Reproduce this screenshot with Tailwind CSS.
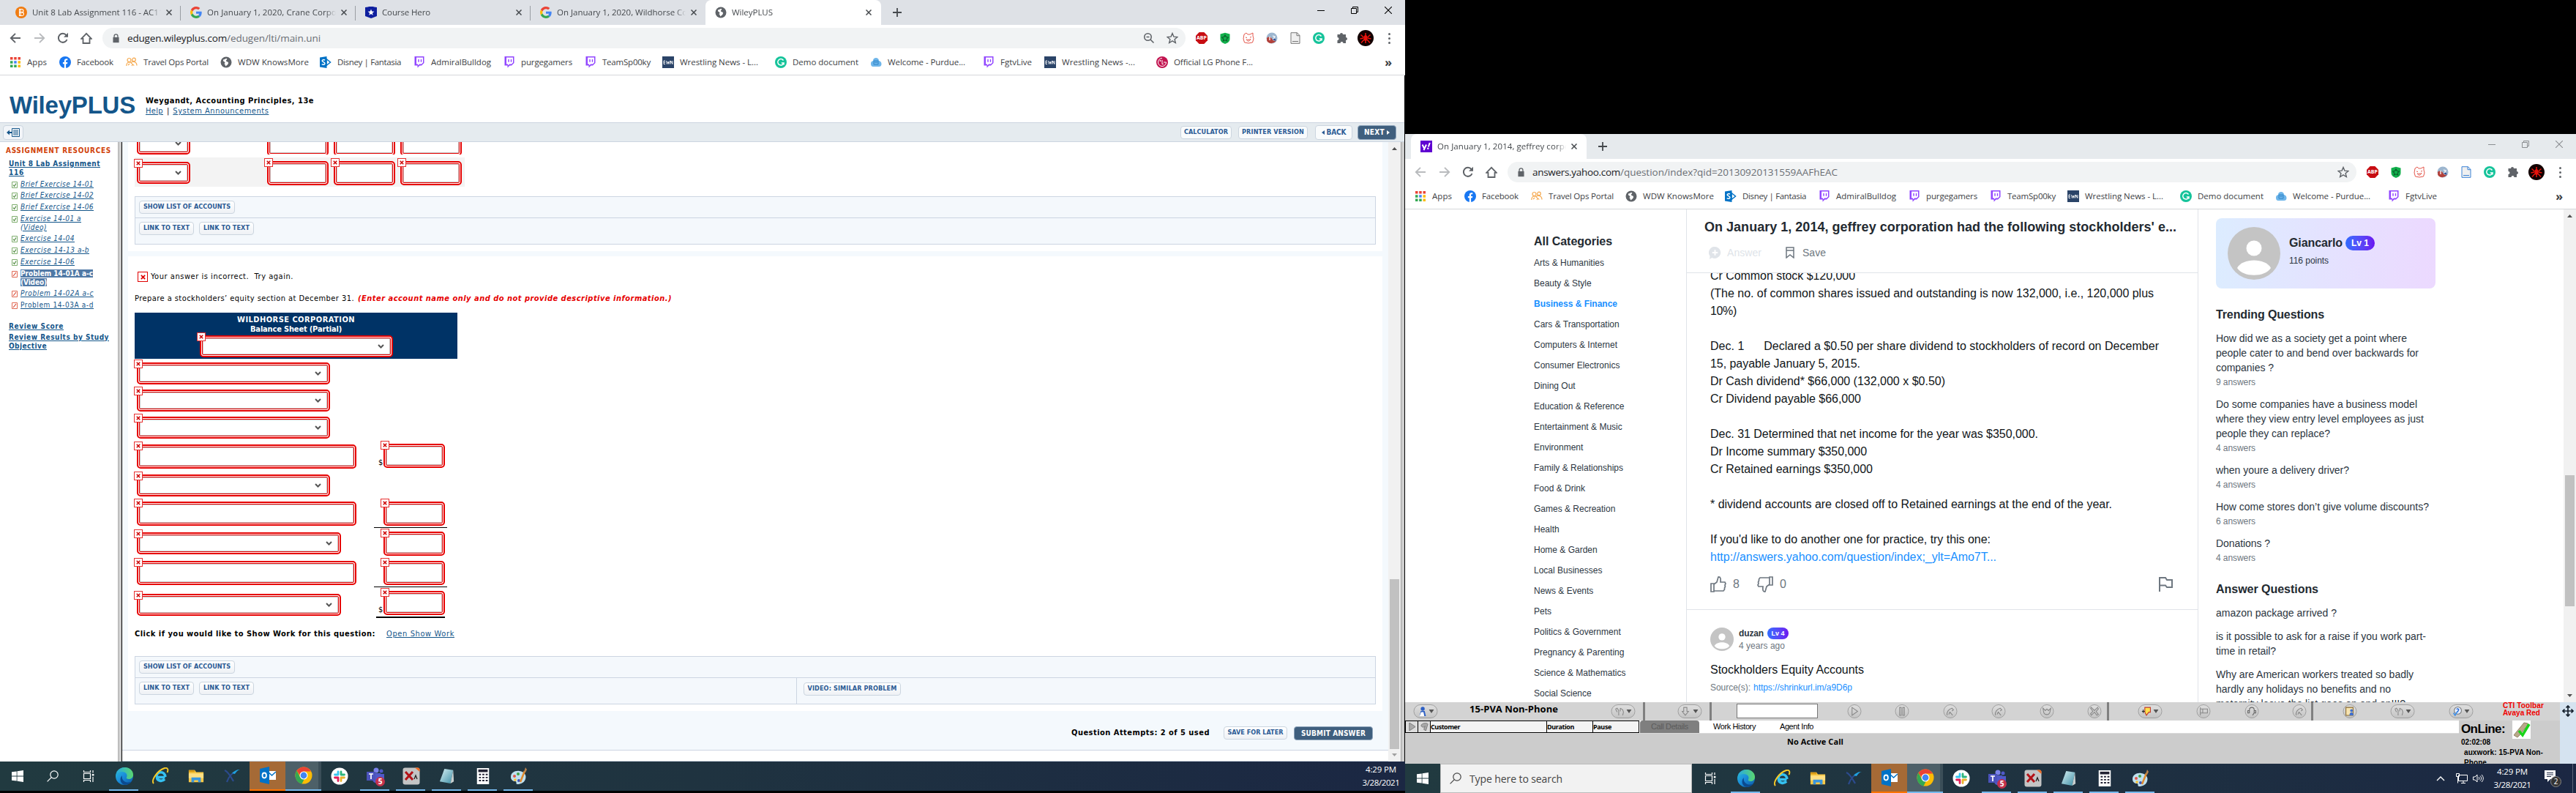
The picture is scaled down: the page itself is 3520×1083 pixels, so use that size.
<!DOCTYPE html>
<html lang="en">
<head>
    <meta charset="UTF-8" />
    <meta name="viewport" content="width=device-width, initial-scale=1.0" />
    <title>Desktop</title>
    <script src="https://cdn.jsdelivr.net/npm/@tailwindcss/browser@4"></script>
</head>
<body class="bg-black">

<!-- Icon sprite -->
<svg class="absolute size-0">
  <defs>
    <linearGradient id="gEdge" x1="0" y1="0" x2="1" y2="1"><stop offset="0" stop-color="#2bc3d2"/><stop offset=".45" stop-color="#1b8fdc"/><stop offset="1" stop-color="#0c59a4"/></linearGradient>
    <linearGradient id="gEdge2" x1="0" y1="0" x2="1" y2="0"><stop offset="0" stop-color="#29a9e0"/><stop offset="1" stop-color="#5ad66f"/></linearGradient>
    <linearGradient id="gNote" x1="0" y1="0" x2="1" y2="1"><stop offset="0" stop-color="#d9f2f5"/><stop offset="1" stop-color="#3f8fa6"/></linearGradient>
  </defs>
  <symbol id="bartleby" viewBox="0 0 16 16"><circle cx="8" cy="8" r="8" fill="#f07c12"/><path d="M5.500 3.500h3.200a2.200 2.200 0 0 1 0 4.400H5.500zM5.500 7.900h3.600a2.300 2.300 0 0 1 0 4.600H5.500zM7.300 3.500v9" fill="none" stroke="#fff" stroke-width="1.100"/></symbol>
  <symbol id="google" viewBox="0 0 48 48"><path fill="#EA4335" d="M24 9.500c3.500 0 6.700 1.200 9.200 3.600l6.900-6.900C35.900 2.400 30.500 0 24 0 14.600 0 6.500 5.400 2.600 13.200l8 6.200C12.400 13.700 17.700 9.500 24 9.500z"/><path fill="#4285F4" d="M47 24.600c0-1.600-.2-3.100-.4-4.600H24v9h12.900c-.6 3-2.200 5.500-4.700 7.200l7.700 6C44.400 38 47 31.800 47 24.600z"/><path fill="#FBBC05" d="M10.500 28.600c-.5-1.500-.8-3-.8-4.600s.3-3.100.8-4.600l-8-6.200C.9 16.500 0 20.100 0 24s.9 7.500 2.600 10.800z"/><path fill="#34A853" d="M24 48c6.500 0 11.900-2.100 15.900-5.800l-7.700-6c-2.200 1.500-4.900 2.300-8.200 2.300-6.300 0-11.600-4.200-13.500-9.900l-8 6.200C6.500 42.600 14.600 48 24 48z"/></symbol>
  <symbol id="hero" viewBox="0 0 16 16"><path d="M0 1c3 0 5-1 5-1h6s2 1 5 1v12l-8 3-8-3z" fill="#0f1f9e"/><path d="M8 3.500l1.200 3 3.200.2-2.500 2 .8 3.100L8 10.100l-2.700 1.700.8-3.100-2.500-2 3.200-.2z" fill="#fff"/></symbol>
  <symbol id="globe" viewBox="0 0 16 16"><circle cx="8" cy="8" r="7.500" fill="#5f6368"/><path d="M4 4.500c2 0 3-2 5-1.500 1 1-1.500 2-1 3.500 1 1 3 .5 3 2.500s-2 3-4 4.500c0-2-.5-3-2-3.500 3-.5 1-3-1-3.500" fill="#fff"/></symbol>
  <symbol id="yahoo" viewBox="0 0 16 16"><rect width="16" height="16" fill="#5f01d1"/><path d="M2.500 5.500l2.700 5.200M8 5.500L4.500 13.200M12.800 3l-2 5.500" stroke="#fff" stroke-width="2" fill="none"/><circle cx="10.300" cy="10.800" r="1.200" fill="#fff"/></symbol>
  <symbol id="apps" viewBox="0 0 16 16"><path d="M1 1h3.500v3.500H1zM6.200 1h3.500v3.500H6.200zM11.500 1H15v3.500h-3.500z" fill="#ea4335"/><path d="M1 6.200h3.500v3.500H1zM1 11.500h3.500V15H1zM6.200 11.500h3.500V15H6.200z" fill="#34a853"/><path d="M6.200 6.200h3.500v3.500H6.200z" fill="#4285f4"/><path d="M11.500 6.200H15v3.500h-3.500zM11.500 11.500H15V15h-3.500z" fill="#fbbc05"/></symbol>
  <symbol id="facebook" viewBox="0 0 16 16"><circle cx="8" cy="8" r="8" fill="#1877f2"/><path d="M6.800 16v-5.700H4.900V8h1.900V6.200c0-2 1.200-3 2.900-3l1.600.1v2h-1c-.9 0-1.200.5-1.200 1.100V8h2.200l-.4 2.300H9.100V16z" fill="#fff"/></symbol>
  <symbol id="travel" viewBox="0 0 16 16"><g fill="none" stroke="#f5a94f" stroke-width="1.200"><circle cx="4.500" cy="5" r="2.500"/><circle cx="11" cy="4.500" r="2.300"/><path d="M.8 13c0-3 1.500-5 4-5s4 3 6.500 4.500M7 9c1-1.500 3-2 4.500-1.500s3.500 2 3.500 5M3 12l2-2M8 13l1.500-2"/></g></symbol>
  <symbol id="share" viewBox="0 0 16 16"><path d="M9 3.500l5.500 4.500L9 12.500z" fill="none" stroke="#0072c6" stroke-width="1.500"/><path d="M0 1.500L9.500 0v16L0 14.500z" fill="#0072c6"/><path d="M7 5.200c-1.500-1-3.800-.7-3.800.8 0 1.800 3.700 1.500 3.700 3.700 0 1.700-2.500 2-4.200.9" fill="none" stroke="#fff" stroke-width="1.500"/></symbol>
  <symbol id="twitch" viewBox="0 0 16 16"><path d="M1.500 0h13v9L11 12.500H8.500L5.500 15.500v-3h-4z" fill="#9146ff"/><path d="M4 1.500h9v7l-2 2H8.200L6 12.300v-1.800H4z" fill="#fff"/><path d="M7 4v3.800M10.500 4v3.800" stroke="#9146ff" stroke-width="1.400"/></symbol>
  <symbol id="ewn" viewBox="0 0 16 16"><rect width="16" height="16" fill="#2b4468"/><path d="M2 6v4.500M2 6h2M2 8.200h2M2 10.500h2M5.500 6l1 4.500L8 7l1 3.500L10.500 6M11.500 10.500V6l2.500 4.500V6" fill="none" stroke="#fff" stroke-width=".9"/></symbol>
  <symbol id="grammarly" viewBox="0 0 16 16"><circle cx="8" cy="8" r="8" fill="#15c39a"/><path d="M11.500 5.500A4.200 4.200 0 1 0 12 9H8.800M12 9v2.500" fill="none" stroke="#fff" stroke-width="1.500"/></symbol>
  <symbol id="purdue" viewBox="0 0 16 16"><path d="M1 10c0-3 2-3.500 3-4 0-3 2-4 4-4s4 1.500 4 4c2 .5 3.500 2 3.500 4.500S14 14 12 14H4c-2 0-3-1.500-3-4z" fill="#6fb6ea"/><path d="M5 6h6v5H5zM6 8h4" fill="none" stroke="#2f84c8" stroke-width="1"/></symbol>
  <symbol id="lg" viewBox="0 0 16 16"><circle cx="8" cy="8" r="8" fill="#c2134f"/><path d="M8 2.500A5.500 5.500 0 1 0 13.500 8H10M8 5v5.500h1.800" fill="none" stroke="#fff" stroke-width="1"/><circle cx="5.500" cy="6" r=".9" fill="#fff"/></symbol>
  <symbol id="back" viewBox="0 0 16 16"><path d="M15 8H2M8 1.800L1.800 8 8 14.200" fill="none" stroke="currentColor" stroke-width="1.900"/></symbol>
  <symbol id="forward" viewBox="0 0 16 16"><path d="M1 8h13M8 1.800L14.200 8 8 14.200" fill="none" stroke="currentColor" stroke-width="1.900"/></symbol>
  <symbol id="reload" viewBox="0 0 16 16"><path d="M13.500 10A6 6 0 1 1 12.500 4" fill="none" stroke="#5f6368" stroke-width="2"/><path d="M15 .8v6H9z" fill="#5f6368"/></symbol>
  <symbol id="home" viewBox="0 0 16 16"><path d="M1.200 8.800L8 1.800l6.800 7H12.500V15h-9V8.800z" fill="none" stroke="#5f6368" stroke-width="1.800"/></symbol>
  <symbol id="lock" viewBox="0 0 16 16"><path d="M3 6h10v9H3z" fill="#5f6368"/><path d="M5 7V4a3 3 0 0 1 6 0v3" fill="none" stroke="#5f6368" stroke-width="1.600"/></symbol>
  <symbol id="zoom" viewBox="0 0 16 16"><circle cx="6.500" cy="6.500" r="4.700" fill="none" stroke="#5f6368" stroke-width="1.600"/><path d="M10 10l4.500 4.500M4.500 6.500h4" stroke="#5f6368" stroke-width="1.600"/></symbol>
  <symbol id="star" viewBox="0 0 16 16"><path d="M8 1.500l1.900 4.600 5 .4-3.800 3.200 1.200 4.800L8 11.900l-4.300 2.600 1.200-4.800L1.100 6.500l5-.4z" fill="none" stroke="#5f6368" stroke-width="1.400"/></symbol>
  <symbol id="shield" viewBox="0 0 16 16"><path d="M1.500 2.500L8 .8l6.500 1.700V9c0 4-3.500 6-6.500 7-3-1-6.500-3-6.500-7z" fill="#12b04c"/><path d="M8 4l1.500 2.500 2.700.6-1.900 2 .3 2.900L8 10.800 5.400 12l.3-2.900-1.900-2 2.700-.6z" fill="none" stroke="#0a5f2b" stroke-width="1.200"/></symbol>
  <symbol id="piggy" viewBox="0 0 16 16"><path d="M2 3l3-2 2 2h3l4-2v4l1 4-1.500 5L8 15l-5.500-1L1 9z" fill="#fff" stroke="#e4574c"/><path d="M4 7l2 .5M10 7l2-.5M5 10c2 3 4 3 6-.5-2 1-4 1-6 .5" fill="none" stroke="#e4574c"/></symbol>
  <symbol id="ball" viewBox="0 0 16 16"><circle cx="8" cy="8" r="7.500" fill="#9db6cf"/><path d="M1 8c3-3 6-1 7 1s3 4 6 2a7.500 7.500 0 0 1-12.800 1z" fill="#b3413a"/><path d="M5 6v5M9 5l3 1-2 3" stroke="#fff" stroke-width="1.300" fill="none"/><path d="M9 9h4v3z" fill="#2d4c96"/></symbol>
  <symbol id="doc" viewBox="0 0 16 16"><path d="M2 .7h8.500L14 4.500v10.800H2z" fill="#f0f0f0" stroke="currentColor" stroke-width="1"/><path d="M10 .7v4h4M4 12.500h8" fill="none" stroke="currentColor" stroke-width="1"/></symbol>
  <symbol id="puzzle" viewBox="0 0 16 16"><path d="M5 3a2 2 0 0 1 4 0h4v4a2 2 0 0 1 0 4v4H9.500a2 2 0 0 0-4 0H1.500v-4a2 2 0 0 0 0-4V3z" fill="#5f6368"/></symbol>
  <symbol id="avatar" viewBox="0 0 22 22"><circle cx="11" cy="11" r="11" fill="#120000"/><g fill="none" stroke="#e8130c" stroke-width="1.500"><path d="M11 4v14M4.500 6.500l4 3.500M17.500 6.500l-4 3.500M3.500 12l5-1M18.500 12l-5-1M5 17.500l4-4.500M17 17.500l-4-4.500"/></g><ellipse cx="11" cy="11" rx="2.500" ry="4" fill="#e8130c"/></symbol>
  <symbol id="abp" viewBox="0 0 16 16"><path d="M4.700 0h6.600L16 4.700v6.600L11.300 16H4.700L0 11.300V4.700z" fill="#c70d12"/></symbol>
  <symbol id="winmin" viewBox="0 0 10 10"><path d="M0 5.500h10" stroke="currentColor"/></symbol>
  <symbol id="winmax" viewBox="0 0 10 10"><path d="M.5 2.500h7v7h-7zM2.500 2.500v-2h7v7h-2" fill="none" stroke="currentColor"/></symbol>
  <symbol id="winx" viewBox="0 0 10 10"><path d="M0 0l10 10M10 0L0 10" stroke="currentColor" stroke-width="1.100"/></symbol>
  <!-- taskbar -->
  <symbol id="windows" viewBox="0 0 16 16"><path d="M0 2.300L6.700 1.400v6.200H0zM7.500 1.300L16 0v7.600H7.500zM0 8.400h6.700v6.200L0 13.700zM7.500 8.400H16V16l-8.500-1.300z" fill="#fff"/></symbol>
  <symbol id="search" viewBox="0 0 16 16"><circle cx="10" cy="6" r="5.200" fill="none" stroke="currentColor" stroke-width="1.200"/><path d="M6.300 9.700L.6 15.400" stroke="currentColor" stroke-width="1.200"/></symbol>
  <symbol id="taskview" viewBox="0 0 16 16"><path d="M1.500 4.500h9v7h-9zM1.500 0v2.500h9V0M1.500 16v-2.500h9V16M14 0v3.500M14 9v7" fill="none" stroke="#fff" stroke-width="1.200"/><path d="M12.800 5h2.600v2.500h-2.600z" fill="#fff"/></symbol>
  <symbol id="edge" viewBox="0 0 24 24"><circle cx="12" cy="12" r="12" fill="url(#gEdge)"/><path d="M1 9C3 3 8 0 13 0c6 0 11 4.500 11 10 0 4-3 6-6 6-2.500 0-4-1-3-2.500C17 9 13 6 9 6 5 6 2 8 1 9z" fill="url(#gEdge2)"/><path d="M9 11c-1.500 5 3 10 8.500 9.500 2 0 4-1 5-2C20 23 15 24.500 11 23.500c-5-2-6-9-2-12.500z" fill="#0b4a8f"/></symbol>
  <symbol id="ie" viewBox="0 0 24 24"><path d="M18.500 13.500H7.500c0 5 7 6.500 10.500 2.500" fill="none" stroke="#35c1f1" stroke-width="3.600"/><path d="M7 12.500C7 5 18.500 4.500 18.800 13" fill="none" stroke="#35c1f1" stroke-width="3.600"/><path d="M3 22C-1 18 8 4 18 1c5-1 5 3 3.500 6" fill="none" stroke="#f6c927" stroke-width="1.900"/></symbol>
  <symbol id="folder" viewBox="0 0 24 24"><path d="M1 3h9l2 3h11v15H1z" fill="#f9c846"/><path d="M1 3h9v3H1z" fill="#d99a13"/><path d="M1 8h22v7H1z" fill="#ffdf82"/><path d="M5 21v-7h14v7h-4v-3H9v3z" fill="#3a96dd"/></symbol>
  <symbol id="xswirl" viewBox="0 0 24 24"><path d="M2 4c5 2 8 8 12 15M5 20C8 12 12 7 18 6" fill="none" stroke="#2b4a8c" stroke-width="2.200"/><path d="M12 8c3-3 6-5 11-5-4 1-6 4-7 6z" fill="#1fa2e0"/></symbol>
  <symbol id="outlook" viewBox="0 0 24 24"><path d="M12 6h11v12H12z" fill="#fff"/><path d="M12 7l5.500 5L23 7" fill="none" stroke="#0072c6" stroke-width="1.500"/><path d="M1 3L14 0v24L1 21z" fill="#0072c6"/><ellipse cx="7.200" cy="12" rx="2.700" ry="3.500" fill="none" stroke="#fff" stroke-width="1.800"/></symbol>
  <symbol id="chrome" viewBox="0 0 24 24"><circle cx="12" cy="12" r="11.500" fill="#fbbc05"/><path d="M12 .5c4.500 0 8 2.200 10 6H12L7 12 2.500 5.500C4.500 2.500 8 .5 12 .5z" fill="#ea4335"/><path d="M2.500 5.500l5 9.500 5 2.500-3 6C2 22-2 13 2.500 5.500z" fill="#34a853"/><circle cx="12" cy="12" r="5.500" fill="#fff"/><circle cx="12" cy="12" r="4.400" fill="#4285f4"/></symbol>
  <symbol id="slack" viewBox="0 0 24 24"><circle cx="12" cy="12" r="11.500" fill="#fff"/><g stroke-width="2.800" stroke-linecap="round"><path d="M10 6v4M5.500 10H10" stroke="#36c5f0"/><path d="M14 6v4M14 10h4.500" stroke="#2eb67d"/><path d="M14 14.500v4M14 14h4.500" stroke="#ecb22e"/><path d="M10 14.500v4M5.500 14H10" stroke="#e01e5a"/></g></symbol>
  <symbol id="teams" viewBox="0 0 24 24"><circle cx="13" cy="4" r="3.500" fill="#7b83eb"/><circle cx="20" cy="5" r="2.500" fill="#5059c9"/><path d="M8 8h11v8c0 7-11 7-11 0zM18 9h6v6c0 3-3 5-5 3z" fill="#5059c9"/><path d="M0 6h12v12H0z" fill="#4b53bc"/><path d="M3 9h6M6 9v7" stroke="#fff" stroke-width="1.700"/></symbol>
  <symbol id="xa" viewBox="0 0 24 24"><rect x=".5" y=".5" width="23" height="23" rx="3" fill="#c4c4c4"/><path d="M17 .5h4q2.500 0 2.500 2.500v3z" fill="#f06a22"/><path d="M4 6l10 11M14 6L4 17" stroke="#b31217" stroke-width="3"/><path d="M16 16l2-5 2 5" fill="none" stroke="#222" stroke-width="1.300"/></symbol>
  <symbol id="notepad" viewBox="0 0 24 24"><path d="M8 1l13 2-4 20L1 20z" fill="url(#gNote)"/><path d="M21 3l1 17-5 3z" fill="#c9cfcf"/></symbol>
  <symbol id="calc" viewBox="0 0 24 24"><path d="M3 0h18v24H3z" fill="#fff"/><path d="M5 2h14v4H5z" fill="#223"/><path d="M6 9.500h3M11 9.500h3M16 9.500h3M6 14h3M11 14h3M16 14h3M6 18.500h3M11 18.500h3M16 18.500h3" stroke="#223" stroke-width="2"/></symbol>
  <symbol id="paint" viewBox="0 0 24 24"><path d="M1 13C1 7 7 4 13 5s10 5 8 11-8 7-11 7 0-4-3-4-6-2-6-6z" fill="#bfe0ef"/><circle cx="6" cy="12" r="2" fill="#e2574c"/><circle cx="11" cy="9" r="2" fill="#43a047"/><circle cx="7" cy="17" r="1.800" fill="#fbc02d"/><circle cx="12" cy="18" r="2" fill="#3f51b5"/><path d="M14 20L20 5" stroke="#e08a2e" stroke-width="2.500"/><path d="M19 6l2-6 2 3-2 4z" fill="#b9824b"/></symbol>
  <!-- CTI bar glyphs -->
  <symbol id="play" viewBox="0 0 12 12"><path d="M3 1l7 5-7 5z" fill="none" stroke="#888"/></symbol>
  <symbol id="pause" viewBox="0 0 12 12"><path d="M3 1h2v10H3zM7 1h2v10H7z" fill="none" stroke="#888"/></symbol>
  <symbol id="phone" viewBox="0 0 12 12"><path d="M2 11c-1-4 2-8 6-9l2 2-2 1.500M4 10l1.500-3L9 11" fill="none" stroke="#888"/></symbol>
  <symbol id="wave" viewBox="0 0 12 12"><path d="M1 2c1 6 1 8 5 8s4-4 5-8L8 5 6 3 4 5z" fill="none" stroke="#888"/></symbol>
  <symbol id="hands" viewBox="0 0 12 12"><path d="M1 3l2-1 2 3v6M3 7L1 3M7 2l3 2 1 3-1 4M7 2v4" fill="none" stroke="#888"/></symbol>
  <symbol id="cross" viewBox="0 0 12 12"><path d="M2 1l4 4 4-4 1 2-3 3 3 4-2 1-3-4-4 4-1-2 3-3-3-4z" fill="none" stroke="#888"/></symbol>
  <symbol id="form" viewBox="0 0 12 12"><path d="M2 1v10M2 3h9v5H2M5 3v5" fill="none" stroke="#888"/></symbol>
  <symbol id="headset" viewBox="0 0 12 12"><path d="M3 8V4a3 3 0 0 1 6 0v4L7 11M3 5H1v3h2M9 5h2v3H9" fill="none" stroke="#666"/></symbol>
  <symbol id="book" viewBox="0 0 12 12"><path d="M1 1h9v10H1z" fill="#f6e3b0" stroke="#8a6a2e"/><circle cx="8" cy="5" r="1.700" fill="#3f6fd0"/><path d="M5.500 11c0-5 5-5 5 0z" fill="#3f6fd0"/></symbol>
  <symbol id="agent" viewBox="0 0 12 12"><circle cx="7" cy="2.800" r="2.500" fill="#2d5fc4"/><path d="M3 12L4.500 5.500h5L11 12z" fill="#2d5fc4"/><path d="M3 12l2-5h3l1 5z" fill="#fff"/></symbol>
  <symbol id="down" viewBox="0 0 12 12"><path d="M3 1h4v5h2l-4 5-4-5h2z" fill="none" stroke="#888"/></symbol>
  <symbol id="transfer" viewBox="0 0 12 12"><path d="M4 1h7v6H9l-3 4-2-4z" fill="#ffe14d" stroke="#c0392b"/><path d="M0 6h4M2 4v4" stroke="#222"/></symbol>
  <symbol id="help" viewBox="0 0 12 12"><circle cx="6.500" cy="5" r="4.500" fill="#e6efff" stroke="#777"/><path d="M5 3.500c1-1.500 3-.5 2.500.8L6.500 6v1" fill="none" stroke="#1d5fd0" stroke-width="1.200"/><path d="M1 8l2 3 3-5" fill="none" stroke="#3f8fe8" stroke-width="1.500"/></symbol>
</svg>

<div class="flex h-[1083px] w-[3520px] overflow-hidden bg-black">

  <!-- ============ Left monitor ============ -->
  <div class="flex h-[1080px] w-[1920px] flex-col bg-white">
    <div id="chromeLeft" class="h-[103px] shrink-0"></div>

    <div class="flex h-[937px] flex-col border-r border-black font-['DejaVu_Sans_Condensed','DejaVu_Sans',sans-serif] text-[11px] text-black">
      <!-- course header -->
      <div class="flex h-16 shrink-0 items-start gap-[14px] pl-[13px] pt-[23px]">
        <div class="w-[172px] font-['Liberation_Sans',sans-serif] text-[33px] leading-9 font-bold text-[#14568a]" data-w="172">WileyPLUS</div>
        <div class="pt-[5px] leading-[14px]">
          <div class="font-bold" data-w="230">Weygandt, Accounting Principles, 13e</div>
          <div class="flex gap-[5px] leading-[13px] text-[#14568a]"><a class="underline" data-w="24">Help</a><span class="text-black">|</span><a class="underline" data-w="131">System Announcements</a></div>
        </div>
      </div>
      <div class="flex h-[27px] shrink-0 items-center border-y border-[#ccd5e0] bg-[#e5ebef] pl-1 pr-[11px] text-[9px] font-bold text-[#2a5a94]">
        <div class="flex h-5 w-[28px] items-center justify-center rounded border border-[#cbd5df] bg-[#f2f5f9]">
          <svg class="h-3 w-[18px]" viewBox="0 0 18 12"><path d="M0 6l4-3.500v7z" fill="#14568a"/><path d="M3 6h4" stroke="#14568a" stroke-width="2"/><path d="M7.500.5h10v11h-10z" fill="#fff" stroke="#14568a"/><path d="M9 3h7M9 5h7M9 7h7M9 9h7" stroke="#14568a"/></svg>
        </div>
        <div class="ml-auto flex h-[18px] w-[70px] items-center justify-center rounded border border-[#cbd5df] bg-[#f9fbfc]"><span data-w="60">CALCULATOR</span></div>
        <div class="ml-[9px] flex h-[18px] w-[95px] items-center justify-center rounded border border-[#cbd5df] bg-[#f9fbfc]"><span data-w="85">PRINTER VERSION</span></div>
        <div class="ml-[10px] flex h-5 w-[51px] items-center justify-center gap-[3px] rounded border border-[#cbd5df] bg-[#f9fbfc] text-[10px]"><svg class="h-[6px] w-[4px]" viewBox="0 0 4 6"><path d="M4 0v6L0 3z" fill="#2a5a94"/></svg><span data-w="27">BACK</span></div>
        <div class="ml-[7px] flex h-5 w-[53px] items-center justify-center gap-[3px] rounded border border-[#8fa5bb] bg-[#3f5f7e] text-[10px] text-white"><span data-w="28">NEXT</span><svg class="h-[6px] w-[4px]" viewBox="0 0 4 6"><path d="M0 0v6l4-3z" fill="#fff"/></svg></div>
      </div>

      <div class="flex min-h-0 flex-1">
        <!-- assignment list -->
        <div class="w-[161px] shrink-0 pl-2 pt-[6px] text-[10px] leading-3 text-[#14568a]">
          <div class="font-bold text-[#d1420a]"><span data-w="144">ASSIGNMENT RESOURCES</span></div>
          <div class="mt-[6px] pl-1 font-bold underline"><span data-w="125">Unit 8 Lab Assignment</span><br><span data-w="21">116</span></div>
          <div id="exercises"></div>
          <div class="mt-[17px] pl-1 font-bold underline"><span data-w="75">Review Score</span></div>
          <div class="mt-[3px] pl-1 font-bold underline"><span data-w="137">Review Results by Study</span><br><span data-w="52">Objective</span></div>
        </div>
        <div class="w-[6px] shrink-0 border-r border-l border-l-[#b0b0b0] border-r-black bg-[#cdcdcd]"></div>

        <!-- question pane -->
        <div class="flex flex-1 flex-col bg-[#f4f9fd]">
          <div class="mr-2 ml-2 h-[149px] bg-white pl-[9px] pr-[9px]">
            <div class="relative h-[17px] overflow-hidden"><div class="absolute bottom-0 left-0 h-[36px] w-full" id="gridRow1"></div></div>
            <div class="mt-[4px] h-10 w-[451px] bg-[#f3f3f3]" id="gridRow2"></div>
            <div class="mt-[13px] h-[66px] border border-[#ccd5e2] bg-[#f4f8fc]">
              <div class="flex h-[29px] items-center border-b border-[#ccd5e2] pl-[5px]" data-btn="SHOW LIST OF ACCOUNTS"></div>
              <div class="flex gap-[7px] pl-[5px] pt-[5px]" data-btn="LINK TO TEXT,LINK TO TEXT"></div>
            </div>
          </div>
          <div class="mt-[7px] mr-2 ml-2 h-[621px] bg-white pl-[9px] pr-[9px] pt-5">
            <div class="flex h-4 items-center gap-1 pl-1">
              <div class="flex size-[14px] items-center justify-center border border-[#e00000]"><svg class="size-[7px]" viewBox="0 0 8 8"><path d="M1 1l6 6M7 1L1 7" stroke="#d00" stroke-width="2"/></svg></div>
              <span data-w="195">Your answer is incorrect.&nbsp; Try again.</span>
            </div>
            <div class="mt-[14px] flex h-4 items-center gap-[5px]"><span data-w="300">Prepare a stockholders’ equity section at December 31.</span><b class="text-[#e60000] italic" data-w="429">(Enter account name only and do not provide descriptive information.)</b></div>
            <div class="mt-[11px] flex h-[63px] w-[441px] flex-col items-center bg-[#003366] pt-[3px] leading-[13px] font-bold text-white">
              <span data-w="161">WILDHORSE CORPORATION</span>
              <span data-w="125">Balance Sheet (Partial)</span>
              <div id="titleBox" class="mt-[2px]"></div>
            </div>
            <div class="flex h-[366px]">
              <div id="colAccounts" class="w-[327px] pl-[3px]"></div>
              <div id="colAmounts" class="w-[100px]"></div>
            </div>
            <div class="mt-[2px] flex h-4 items-center gap-[15px]"><b data-w="329">Click if you would like to Show Work for this question:</b><a class="text-[#14568a] underline" data-w="93">Open Show Work</a></div>
            <div class="mt-[22px] h-[66px] border border-[#ccd5e2] bg-[#f4f8fc]">
              <div class="flex h-[29px] items-center border-b border-[#ccd5e2] pl-[5px]" data-btn="SHOW LIST OF ACCOUNTS"></div>
              <div class="flex h-[35px]">
                <div class="flex w-[904px] gap-[7px] border-r border-[#ccd5e2] pl-[5px] pt-[5px]" data-btn="LINK TO TEXT,LINK TO TEXT"></div>
                <div class="flex pl-[9px] pt-[6px]" data-btn="VIDEO: SIMILAR PROBLEM"></div>
              </div>
            </div>
          </div>
          <div class="flex h-[53px] items-center justify-end pr-[21px] pt-[7px] font-bold">
            <span data-w="189">Question Attempts: 2 of 5 used</span>
            <div class="ml-[19px] flex" data-btn="SAVE FOR LATER"></div>
            <div class="ml-[9px] flex h-[19px] w-[108px] items-center justify-center rounded border border-[#8fa5bb] bg-[#3f5f7e] text-[10px] text-white"><span data-w="88">SUBMIT ANSWER</span></div>
          </div>
          <div class="h-4 border-y border-[#ccd5e2] bg-white"></div>
        </div>
        <div class="flex w-[17px] shrink-0 flex-col items-center bg-[#f1f1f1]">
          <svg class="mt-[7px] h-1 w-[7px]" viewBox="0 0 7 4"><path d="M0 4L3.500 0 7 4z" fill="#505050"/></svg>
          <div class="mt-[586px] h-[232px] w-[13px] bg-[#c1c1c1]"></div>
          <svg class="mt-[6px] h-1 w-[7px]" viewBox="0 0 7 4"><path d="M0 0l3.500 4L7 0z" fill="#a0a0a0"/></svg>
        </div>
        <div class="w-[5px] shrink-0 border-l border-[#a0a0a0] bg-[#cdcdcd]"></div>
      </div>
    </div>

    <div id="taskLeft" class="h-10 shrink-0"></div>
  </div>

  <!-- ============ Right monitor ============ -->
  <div class="mt-[183px] flex h-[900px] w-[1600px] flex-col bg-white font-['Liberation_Sans',sans-serif]">
    <div id="chromeRight" class="h-[103px] shrink-0"></div>

    <div class="flex h-[673px] shrink-0 overflow-hidden text-[#2c363f]">
      <div class="w-[385px] shrink-0 border-r border-[#e0e4e9] pl-[176px] pt-[34px]">
        <div class="text-base leading-5 font-bold text-[#232a31]"><span data-w="107">All Categories</span></div>
        <div id="categories" class="mt-[5px] text-xs leading-7"></div>
      </div>

      <div class="flex w-[699px] shrink-0 flex-col border-r border-[#e0e4e9]">
        <div class="h-[87px] shrink-0 border-b border-[#e0e4e9] pl-6 pt-[14px]">
          <div class="text-lg leading-5 font-bold text-[#232a31]"><span data-w="645">On January 1, 2014, geffrey corporation had the following stockholders' e...</span></div>
          <div class="mt-[15px] flex h-5 items-center text-sm">
            <svg class="ml-[6px] size-[17px]" viewBox="0 0 16 16"><path d="M8 0a7.500 7.500 0 1 1-4 14L1 16l.5-4A7.500 7.500 0 0 1 8 0z" fill="#e0e4e9"/><path d="M8 4v7M4.500 7.500h7" stroke="#fff" stroke-width="1.800"/></svg>
            <span class="ml-2 text-[#e0e4e9]" data-w="47">Answer</span>
            <svg class="ml-[33px] h-4 w-3" viewBox="0 0 12 16"><path d="M1 1h10v14l-5-4-5 4zM1 5h10" fill="none" stroke="#6e7780" stroke-width="1.500"/></svg>
            <span class="ml-[11px] text-[#6e7780]" data-w="32">Save</span>
          </div>
        </div>
        <div class="h-[460px] shrink-0 overflow-hidden border-b border-[#e0e4e9] pl-8">
          <div id="answer" class="-mt-2 text-base leading-6 text-[#101518]"></div>
          <div class="mt-[14px] flex h-[22px] items-center text-base text-[#6e7780]">
            <svg class="size-[22px]" viewBox="0 0 22 22"><path d="M1 10h4v11H1zM5 11l4-3 2-7c3-.5 3.500 2 3 7h6l1 2-1 2 .5 2-1 2v2l-1.500 2H5" fill="none" stroke="#6e7780" stroke-width="1.700"/></svg>
            <span class="ml-[9px]">8</span>
            <svg class="ml-[24px] size-[22px] rotate-180" viewBox="0 0 22 22"><path d="M1 10h4v11H1zM5 11l4-3 2-7c3-.5 3.500 2 3 7h6l1 2-1 2 .5 2-1 2v2l-1.500 2H5" fill="none" stroke="#6e7780" stroke-width="1.700"/></svg>
            <span class="ml-[9px]">0</span>
            <svg class="mr-[34px] ml-auto h-5 w-[19px]" viewBox="0 0 19 20"><path d="M1 20V1h8l2 3h7v10h-7l-2-2.500H1" fill="none" stroke="#6e7780" stroke-width="2"/></svg>
          </div>
        </div>
        <div class="pl-8 pt-6">
          <div class="flex gap-[7px]">
            <svg class="size-8" viewBox="0 0 72 72"><circle cx="36" cy="36" r="36" fill="#c4c4c4"/><circle cx="36" cy="29" r="10.500" fill="#fff"/><path d="M13 56c7-14 39-14 46 0-8 13-38 13-46 0z" fill="#fff"/></svg>
            <div class="text-xs">
              <div class="flex h-4 items-center gap-[5px]"><b data-w="34">duzan</b><span class="flex h-4 w-[29px] items-center justify-center rounded-full bg-gradient-to-r from-[#2d6bff] to-[#6a10f0] text-[9px] font-bold text-white">Lv 4</span></div>
              <div class="leading-[18px] text-[#6e7780]"><span data-w="63">4 years ago</span></div>
            </div>
          </div>
          <div class="mt-[12px] text-base leading-6 text-[#101518]"><span data-w="210">Stockholders Equity Accounts</span></div>
          <div class="mt-[2px] flex gap-1 text-xs leading-5 text-[#6e7780]"><span data-w="55">Source(s):</span><a class="text-[#188fff]" data-w="135">https://shrinkurl.im/a9D6p</a></div>
        </div>
      </div>

      <div class="flex-1 pl-6 pt-3">
        <div class="flex h-24 w-[300px] items-center rounded-lg bg-gradient-to-r from-[#dcecff] to-[#ecd9ff] pl-4">
          <svg class="size-[72px]" viewBox="0 0 72 72"><circle cx="36" cy="36" r="36" fill="#c4c4c4"/><circle cx="36" cy="29" r="10.500" fill="#fff"/><path d="M13 56c7-14 39-14 46 0-8 13-38 13-46 0z" fill="#fff"/></svg>
          <div class="-mt-2 ml-3">
            <div class="flex items-center gap-[4px] text-base font-bold text-[#232a31]"><span data-w="73">Giancarlo</span><span class="flex h-5 w-10 items-center justify-center rounded-full bg-gradient-to-r from-[#2d6bff] to-[#6a10f0] text-xs text-white">Lv 1</span></div>
            <div class="mt-1 text-xs leading-4"><span data-w="54">116 points</span></div>
          </div>
        </div>
        <div class="mt-[26px] text-base leading-5 font-bold text-[#232a31]"><span data-w="148">Trending Questions</span></div>
        <div id="trending" class="mt-[12px] text-sm leading-5"></div>
        <div class="mt-[23px] text-base leading-5 font-bold text-[#232a31]"><span data-w="140">Answer Questions</span></div>
        <div class="mt-[12px] text-sm leading-5">
          <div data-w="165">amazon package arrived ?</div>
          <div class="mt-3" data-w="287">is it possible to ask for a raise if you work part-</div>
          <div data-w="82">time in retail?</div>
          <div class="mt-3" data-w="270">Why are American workers treated so badly</div>
          <div data-w="239">hardly any holidays no benefits and no</div>
          <div data-w="259">maternity leave the list goes on and on!!!?</div>
        </div>
      </div>
      <div class="flex w-[17px] shrink-0 flex-col items-center bg-[#f1f1f1]">
        <svg class="mt-[7px] h-1 w-[7px]" viewBox="0 0 7 4"><path d="M0 4L3.500 0 7 4z" fill="#505050"/></svg>
        <div class="mt-[352px] h-[179px] w-[13px] bg-[#c1c1c1]"></div>
        <svg class="mt-[120px] h-1 w-[7px]" viewBox="0 0 7 4"><path d="M0 0l3.500 4L7 0z" fill="#505050"/></svg>
      </div>
    </div>

    <!-- CTI toolbar -->
    <div class="flex h-[84px] shrink-0">
      <div class="flex w-[1578px] flex-col bg-[#cccccc]">
        <div id="cti" class="relative h-[25px] shrink-0 bg-[#d3d3d3] text-black"></div>
        <div class="flex min-h-0 flex-1">
          <div class="w-[1440px]">
            <div class="flex h-[18px] border-b border-[#d9d9d9] bg-white text-[11px] text-black">
              <div class="flex w-[320px] divide-x divide-black border border-black bg-[#f3f3f3] font-['Open_Sans',sans-serif] text-[9px] leading-4 font-bold">
                <div class="flex w-[17px] items-center justify-center bg-[#ddd]"><svg class="size-[11px]" viewBox="0 0 12 12"><path d="M2 0l9 6-9 6z" fill="#aaa" stroke="#777"/></svg></div>
                <div class="flex w-[17px] items-center justify-center bg-[#ddd]"><svg class="size-[11px]" viewBox="0 0 12 12"><path d="M1 5c0-5 9-5 10-3L8 12 5 10l2-5-3 2z" fill="#aaa" stroke="#777"/></svg></div>
                <div class="w-[159px]"><span data-w="40">Customer</span></div>
                <div class="w-[63px]"><span data-w="37">Duration</span></div>
                <div><span data-w="25">Pause</span></div>
              </div>
              <div class="ml-px flex w-[81px] items-center justify-center rounded-t bg-[#7f7f7f] text-[#5c5c5c]"><span data-w="51">Call Details</span></div>
              <div class="ml-[19px] leading-[17px]"><span data-w="58">Work History</span></div>
              <div class="ml-[33px] leading-[17px]"><span data-w="46">Agent Info</span></div>
            </div>
            <div class="pl-[522px] pt-1 font-['Open_Sans',sans-serif] text-[11px] leading-[14px] font-bold text-black"><span data-w="77">No Active Call</span></div>
          </div>
          <div class="flex-1 overflow-hidden pl-[3px] text-[10px] font-bold text-black">
            <div class="flex h-[25px] gap-[10px]"><span class="text-[17px] leading-[23px]" data-w="60">OnLine:</span>
              <svg class="h-[25px] w-[25px] bg-white" viewBox="0 0 25 25"><path d="M2 20L16 3l5 1 1 5-5 2-7 9-3 3z" fill="#b9a98a" stroke="#8f8368"/><path d="M9 14l5 6L23 5" fill="none" stroke="#19d419" stroke-width="3.500"/></svg></div>
            <div class="leading-[10px]"><span data-w="40">02:02:08</span></div>
            <div class="mt-[2px] pl-1 leading-[14px]"><span data-w="108">auxwork: 15-PVA Non-</span><br><span data-w="31">Phone</span></div>
          </div>
        </div>
      </div>
      <div class="flex-1 bg-[#d5e3f0] pl-[3px] pt-[4px]"><svg class="size-4" viewBox="0 0 16 16"><path d="M8 1v14M1 8h14M5.500 3.500L8 1l2.500 2.500M5.500 12.500L8 15l2.500-2.500M3.500 5.500L1 8l2.500 2.500M12.500 5.500L15 8l-2.500 2.500" fill="none" stroke="#15212e" stroke-width="1.700"/></svg></div>
    </div>

    <div id="taskRight" class="h-10 shrink-0"></div>
  </div>
</div>

<script>
    const $ = id => document.getElementById(id);
    const use = (name, cls) => `<svg class="${cls}"><use href="#${name}"/></svg>`;

    // [icon, label, slot width, label width]
    const bookmarks = [
      ["apps", "Apps", 68, 27], ["facebook", "Facebook", 91, 50], ["travel", "Travel Ops Portal", 129, 89],
      ["globe", "WDW KnowsMore", 136, 97], ["share", "Disney | Fantasia", 128, 87], ["twitch", "AdmiralBulldog", 123, 82],
      ["twitch", "purgegamers", 111, 70], ["twitch", "TeamSp00ky", 106, 66], ["ewn", "Wrestling News - L...", 154, 107],
      ["grammarly", "Demo document", 130, 90], ["purdue", "Welcome - Purdue...", 154, 106], ["twitch", "FgtvLive", 84, 43],
      ["ewn", "Wrestling News -...", 153, 100], ["lg", "Official LG Phone F...", 130, 108]
    ];

    function browserChrome(o) {
      const tabs = o.tabs.map((t, i) => `
        <div class="${i === o.active ? 'w-[240px] rounded-t-lg bg-white' : o.active === i + 1 ? 'w-[239px]' : 'w-[239px] bg-[linear-gradient(#9a9ea3,#9a9ea3)] bg-[length:1px_20px] bg-[position:right_8px] bg-no-repeat'} flex h-[34px] items-center pl-[13px] text-[#45494d]">
          ${use(t[0], 'size-4')}
          <div class="ml-[7px] w-[176px] overflow-hidden [mask-image:linear-gradient(to_right,#000_92%,transparent)]"><span data-w="${t[2]}">${t[1]}</span></div>
          <svg class="ml-[7px] size-2" viewBox="0 0 8 8"><path d="M.5.5l7 7M7.500.5l-7 7" stroke="#45494d" stroke-width="1.500"/></svg>
        </div>`).join("");
      return `
        <div class="flex h-[103px] flex-col border-b border-[#d5d7da] bg-white font-['Open_Sans',sans-serif] text-[11.5px] text-[#3c4043]">
          <div class="flex h-[34px] items-center pl-2 ${o.strip}">
            ${tabs}
            <svg class="ml-4 size-3" viewBox="0 0 12 12"><path d="M6 0v12M0 6h12" stroke="#45494d" stroke-width="1.800"/></svg>
            <div class="mr-[18px] mb-[6px] ml-auto flex gap-9 ${o.ctl}">${use('winmin', 'size-[10px]')}${use('winmax', 'size-[10px]')}${use('winx', 'size-[10px]')}</div>
          </div>
          <div class="flex h-9 items-center pl-[13px] pr-[20px]">
            <div class="${o.back}">${use('back', 'size-4')}</div>
            <div class="ml-[17px] text-[#b9bbbe]">${use('forward', 'size-4')}</div>
            ${use('reload', 'ml-4 size-4')}
            ${use('home', 'ml-4 size-4')}
            <div class="ml-[14px] flex h-7 flex-1 items-center rounded-full bg-[#f1f3f4] pl-[12px] pr-[10px] text-[13.5px] text-[#6b6f74]">
              ${use('lock', 'size-[13px]')}
              <span class="ml-[9px] text-[#202124]" data-w="${o.hostW}">${o.host}</span><span data-w="${o.pathW}">${o.path}</span>
              <div class="ml-auto flex gap-4">${o.zoom ? use('zoom', 'size-4') : ''}${use('star', 'size-4')}</div>
            </div>
            <div class="ml-[14px] flex items-center gap-4">
              <div class="relative size-4">${use('abp', 'size-4')}<b class="absolute inset-0 text-center text-[7px] leading-4 text-white">ABP</b></div>
              ${use('shield', 'size-4')}${use('piggy', 'size-4')}${use('ball', 'size-4')}
              <div class="${o.doc}">${use('doc', 'size-4')}</div>
              ${use('grammarly', 'size-4')}${use('puzzle', 'size-4')}
            </div>
            ${use('avatar', 'ml-[13px] size-[22px]')}
            <div class="ml-[20px] flex w-[3px] flex-col gap-[3px]"><i class="size-[3px] rounded-full bg-[#5f6368]"></i><i class="size-[3px] rounded-full bg-[#5f6368]"></i><i class="size-[3px] rounded-full bg-[#5f6368]"></i></div>
          </div>
          <div class="flex h-[28px] items-center pl-[13px] pt-px">
            ${bookmarks.slice(0, o.count).map(b => `<div class="flex shrink-0 items-center gap-2" style="width:${b[2]}px">${use(b[0], 'size-4 shrink-0')}<span data-w="${b[3]}">${b[1]}</span></div>`).join("")}
            <span class="mr-[18px] ml-auto text-base leading-4 font-bold">»</span>
          </div>
        </div>`;
    }

    $("chromeLeft").innerHTML = browserChrome({
      tabs: [["bartleby", "Unit 8 Lab Assignment 116 - AC116", 186], ["google", "On January 1, 2020, Crane Corpora", 188], ["hero", "Course Hero", 66], ["google", "On January 1, 2020, Wildhorse Corp", 190], ["globe", "WileyPLUS", 56]],
      active: 4, strip: "bg-[#dee1e6]", ctl: "text-black", back: "text-[#5f6368]", doc: "text-[#777]",
      host: "edugen.wileyplus.com", hostW: 136, path: "/edugen/lti/main.uni", pathW: 128, zoom: true, count: 14
    });
    $("chromeRight").innerHTML = browserChrome({
      tabs: [["yahoo", "On January 1, 2014, geffrey corpora", 192]],
      active: 0, strip: "bg-[#e6eaed]", ctl: "text-[#8b8e91]", back: "text-[#b9bbbe]", doc: "text-[#3b82d6]",
      host: "answers.yahoo.com", hostW: 120, path: "/question/index?qid=20130920131559AAFhEAC", pathW: 297, zoom: false, count: 12
    });

    // Sidebar exercises: [lines, widths, state]
    const exercises = [
      [["Brief Exercise 14-01"], [100], "ok"], [["Brief Exercise 14-02"], [100], "ok"], [["Brief Exercise 14-06"], [100], "ok"],
      [["Exercise 14-01 a", "(Video)"], [83, 36], "ok"], [["Exercise 14-04"], [74], "ok"], [["Exercise 14-13 a-b"], [94], "ok"], [["Exercise 14-06"], [74], "ok"],
      [["Problem 14-01A a-c", "(Video)"], [99, 36], "current"], [["Problem 14-02A a-c"], [100], "bad"], [["Problem 14-03A a-d"], [100], "todo"]
    ];
    $("exercises").innerHTML = exercises.map(([lines, w, st]) => `
      <div class="mt-[3.7px] flex items-start gap-1 pl-2">
        <svg class="mt-[2px] h-[9px] w-[8px]" viewBox="0 0 8 9"><path d="M.5.5h7v8h-7z" fill="#fff" stroke="${st === 'ok' ? '#7fae6f' : '#e06a55'}"/><path d="${st === 'ok' ? 'M2 4.500l1.500 2L6 2.500' : 'M2 7l4-5'}" fill="none" stroke="${st === 'ok' ? '#4f8a3f' : '#d9402a'}" stroke-width="1.200"/></svg>
        <div class="${st === 'current' ? 'font-bold text-white' : st === 'todo' ? 'underline' : 'italic underline'}">${lines.map((l, i) => `<div><span class="${st === 'current' ? 'bg-[#5079a6]' : ''}" data-w="${w[i]}">${l}</span></div>`).join("")}</div>
      </div>`).join("");

    // Red "wrong answer" field
    function field(size, select) {
      return `<div class="relative ${size} rounded-[5px] border-2 border-[#e60000] bg-white p-px">
        <div class="flex h-full items-center justify-end rounded-[2px] border border-[#e60000] bg-white pr-[8px] shadow-[inset_0_0_0_1px_#c8c8c8]">${select ? '<svg class="h-[6px] w-[9px]" viewBox="0 0 9 6"><path d="M1 1l3.500 3.500L8 1" fill="none" stroke="#555" stroke-width="2"/></svg>' : ''}</div>
        <div class="absolute -top-[6px] -left-[6px] flex h-3 w-3 items-center justify-center border border-[#e83030] bg-white"><svg class="size-[6px]" viewBox="0 0 8 8"><path d="M1 1l6 6M7 1L1 7" stroke="#c00" stroke-width="2"/></svg></div>
      </div>`;
    }
    const gridRow = `<div class="flex items-start pl-[3px] pt-[5px]">
      <div class="mr-[105px] pt-px">${field('h-[30px] w-[73px]', true)}</div>
      <div class="flex gap-[7px]">${field('h-[33px] w-[84px]')}${field('h-[33px] w-[84px]')}${field('h-[33px] w-[84px]')}</div></div>`;
    $("gridRow1").innerHTML = gridRow;
    $("gridRow2").innerHTML = gridRow;
    $("titleBox").innerHTML = field('h-[30px] w-[264px]', true);

    $("colAccounts").innerHTML = [
      ["mt-[5px] h-[30px] w-[264px]", 1], ["mt-[7px] h-[30px] w-[264px]", 1], ["mt-[7px] h-[30px] w-[264px]", 1],
      ["mt-[8px] h-[33px] w-[300px]", 0], ["mt-[8px] h-[30px] w-[264px]", 1], ["mt-[7px] h-[33px] w-[300px]", 0],
      ["mt-[9px] h-[30px] w-[279px]", 1], ["mt-[9px] h-[33px] w-[300px]", 0], ["mt-[12px] h-[30px] w-[279px]", 1]
    ].map(f => field(f[0], f[1])).join("");

    const amount = (mt, dollar) => `<div class="flex items-end ${mt}"><span class="w-[13px] pl-[6px] leading-[14px]">${dollar ? '$' : ''}</span>${field('h-[33px] w-[84px]')}</div>`;
    $("colAmounts").innerHTML =
      amount("mt-[116px]", true) + amount("mt-[46px]") + '<div class="mt-[2px] h-px bg-black"></div>' +
      amount("mt-[5px]") + amount("mt-[7px]") + '<div class="mt-[2px] h-px bg-black"></div>' +
      amount("mt-[5px]", true) + '<div class="mt-[2px] ml-[3px] h-[2px] w-[94px] bg-black"></div>';

    // Small grey buttons
    const btnW = { "SHOW LIST OF ACCOUNTS": [131, 119], "LINK TO TEXT": [75, 63], "VIDEO: SIMILAR PROBLEM": [133, 122], "SAVE FOR LATER": [87, 76] };
    document.querySelectorAll("[data-btn]").forEach(el => {
      el.innerHTML = el.dataset.btn.split(",").map(t => `<div class="flex h-[18px] items-center justify-center rounded border border-[#cbd5df] bg-gradient-to-b from-white to-[#eef1f5] text-[9px] font-bold text-[#2a5a94]" style="width:${btnW[t][0]}px"><span data-w="${btnW[t][1]}">${t}</span></div>`).join("");
    });

    $("categories").innerHTML = ["Arts & Humanities", "Beauty & Style", "Business & Finance", "Cars & Transportation", "Computers & Internet", "Consumer Electronics", "Dining Out", "Education & Reference", "Entertainment & Music", "Environment", "Family & Relationships", "Food & Drink", "Games & Recreation", "Health", "Home & Garden", "Local Businesses", "News & Events", "Pets", "Politics & Government", "Pregnancy & Parenting", "Science & Mathematics", "Social Science"]
      .map((c, i) => `<div class="${i === 2 ? 'font-bold text-[#188fff]' : ''}">${c.replace('&', '&amp;')}</div>`).join("");

    $("answer").innerHTML = [
      ["Cr Common stock $120,000", 198], ["(The no. of common shares issued and outstanding is now 132,000, i.e., 120,000 plus", 606], ["10%)", 36], ["", 0],
      ["Dec. 1&nbsp; &nbsp; &nbsp; Declared a $0.50 per share dividend to stockholders of record on December", 613], ["15, payable January 5, 2015.", 205], ["Dr Cash dividend* $66,000 (132,000 x $0.50)", 321], ["Cr Dividend payable $66,000", 206], ["", 0],
      ["Dec. 31 Determined that net income for the year was $350,000.", 448], ["Dr Income summary $350,000", 214], ["Cr Retained earnings $350,000", 222], ["", 0],
      ["* dividend accounts are closed off to Retained earnings at the end of the year.", 549], ["", 0],
      ["If you'd like to do another one for practice, try this one:", 383], ["http://answers.yahoo.com/question/index;_ylt=Amo7T...", 391]
    ].map((l, i) => `<div class="h-6 ${i === 16 ? 'text-[#188fff]' : ''}"><span data-w="${l[1]}">${l[0]}</span></div>`).join("");

    $("trending").innerHTML = [
      [[["How did we as a society get a point where", 261], ["people cater to and bend over backwards for", 277], ["companies ?", 79]], 9],
      [[["Do some companies have a business model", 275], ["where they view entry level employees as just", 284], ["people they can replace?", 156]], 4],
      [[["when youre a delivery driver?", 182]], 4], [[["How come stores don’t give volume discounts?", 291]], 6], [[["Donations ?", 74]], 4]
    ].map(q => `<div class="mb-[10px]">${q[0].map(l => `<div><span data-w="${l[1]}">${l[0]}</span></div>`).join("")}<div class="text-xs leading-5 text-[#6e7780]"><span data-w="54">${q[1]} answers</span></div></div>`).join("");

    // CTI toolbar buttons sit at free positions along the bar: [icon, centre x, pill?]
    const cti = [["agent", 28, 1], ["hands", 298, 1], ["down", 389, 1], ["play", 614], ["pause", 679], ["phone", 745], ["phone", 811], ["wave", 877], ["cross", 942], ["transfer", 1018, 1], ["form", 1091], ["headset", 1157], ["phone", 1222], ["book", 1291], ["hands", 1363, 1], ["help", 1443, 1]];
    $("cti").innerHTML = cti.map(([icon, x, pill]) => `<div class="absolute top-[3px] flex h-[19px] -translate-x-1/2 items-center justify-center gap-[3px] rounded-full border border-[#a0a0a0] bg-gradient-to-b from-[#dedede] to-[#c4c4c4] ${pill ? 'w-[33px]' : 'w-[19px]'}" style="left:${x}px">${use(icon, 'size-[13px]')}${pill ? '<svg class="h-[5px] w-[7px]" viewBox="0 0 7 5"><path d="M0 0h7L3.500 5z" fill="#555"/></svg>' : ''}</div>`).join("")
      + [325, 416, 959, 1238].map(x => `<div class="absolute top-0 h-full w-[3px] bg-[#808080]" style="left:${x}px"></div>`).join("")
      + `<b class="absolute top-0 left-[88px] font-['Open_Sans',sans-serif] text-[13px] leading-[18px]"><span data-w="121">15-PVA Non-Phone</span></b>
         <div class="absolute top-[2px] left-[453px] h-5 w-[111px] border border-[#767676] bg-white"></div>
         <b class="absolute top-0 left-[1500px] text-[10px] leading-[10px] text-[#f00000]"><span data-w="56">CTI Toolbar</span><br><span data-w="51">Avaya Red</span></b>`;

    function taskbar(o) {
      const apps = ["edge", "ie", "folder", "xswirl", "outlook", "chrome", "slack", "teams", "xa", "notepad", "calc", "paint"];
      const open = ["edge", "teams", "xa", "notepad", "calc", "paint"];
      return `<div class="flex h-10 w-full bg-gradient-to-r from-[#213a40] via-[#1f3340] to-[#1b2743] font-['Open_Sans',sans-serif] text-white">
        <div class="flex w-12 items-center justify-center">${use('windows', 'size-4')}</div>
        ${o.search
          ? `<div class="flex w-[344px] items-center border border-[#bbb] bg-[#f2f2f2] pl-[12px] text-[#444]">${use('search', 'size-4')}<span class="ml-[11px] text-[14px]" data-w="127">Type here to search</span></div>`
          : `<div class="flex w-12 items-center justify-center">${use('search', 'size-4')}</div>`}
        <div class="flex w-[49px] items-center justify-center">${use('taskview', 'size-4')}</div>
        ${apps.map(a => `<div class="relative flex w-[49px] items-center justify-center ${a === 'outlook' ? 'border-b-2 border-[#ff7300] bg-[#a56a36]' : a === 'chrome' ? 'border-b-2 border-[#76b9ed] bg-[#4d6068] shadow-[inset_-4px_0_0_#3b4e58]' : ''}">
          ${use(a, a === 'folder' || a === 'notepad' || a === 'calc' ? 'size-[22px]' : 'size-6')}
          ${a === 'teams' ? '<span class="absolute right-[11px] bottom-[6px] flex size-[13px] items-center justify-center rounded-full bg-[#c4314b] text-[10px] font-bold">5</span>' : ''}
          ${open.includes(a) ? '<i class="absolute bottom-0 left-1 h-[2px] w-10 bg-[#76b9ed]"></i>' : ''}
        </div>`).join("")}
        <div class="ml-auto flex items-center">
          ${o.search ? `<svg class="mr-[15px] h-[7px] w-3" viewBox="0 0 12 7"><path d="M1 6l5-5 5 5" fill="none" stroke="#fff" stroke-width="1.400"/></svg>
          <svg class="mr-[7px] size-4" viewBox="0 0 16 16"><path d="M3.500 3.500h12v8h-12zM7 14.500h6M10 11.500v3M.5 1.500h4v4h-4zM2.500 5.500v9" fill="none" stroke="#fff"/></svg>
          <svg class="mr-[11px] size-4" viewBox="0 0 16 16"><path d="M.5 6h2.500l3-3v10l-3-3H.5zM8 6c1 1 1 3 0 4M10 4.500c2 2 2 5 0 7M12 3c3 3 3 7 0 10" fill="none" stroke="#fff"/></svg>` : ''}
          <div class="flex w-[54px] flex-col items-center text-[11.5px] leading-[18px]"><span data-w="42">4:29 PM</span><span data-w="51">3/28/2021</span></div>
          ${o.search ? `<div class="relative ml-[16px] size-[24px]"><svg class="size-[18px]" viewBox="0 0 18 18"><path d="M1 1h15v12h-7l-4 4v-4H1z" fill="#fff"/><path d="M4 4.500h9M4 7h9M4 9.500h6" stroke="#1b2743"/></svg><span class="absolute right-0 bottom-0 flex size-[15px] items-center justify-center rounded-full border border-[#888] bg-[#333] text-[10px]">2</span></div><div class="ml-[15px] mr-1 h-10 w-px bg-[#5c6478]"></div>` : '<div class="w-[6px]"></div>'}
        </div>
      </div>`;
    }
    $("taskLeft").innerHTML = taskbar({ search: false });
    $("taskRight").innerHTML = taskbar({ search: true });

    function fitLabels() {
      document.querySelectorAll("[data-w]").forEach(el => {
        const target = +el.dataset.w;
        if (!target) return;
        el.style.whiteSpace = "nowrap";
        el.style.letterSpacing = "0px";
        const range = document.createRange();
        range.selectNodeContents(el);
        const diff = target - range.getBoundingClientRect().width;
        el.style.letterSpacing = (diff / el.textContent.length) + "px";
      });
    }
    fitLabels();
    // fonts and styles can land after the first pass
    window.addEventListener("load", () => { fitLabels(); requestAnimationFrame(fitLabels); setTimeout(fitLabels, 100); });
    document.fonts.ready.then(fitLabels);
</script>

</body>
</html>
